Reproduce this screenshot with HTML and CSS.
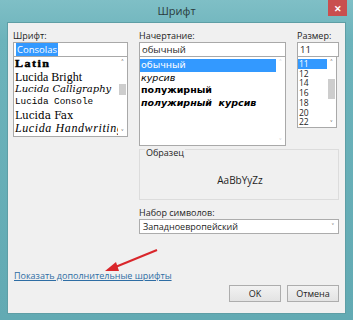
FILE: index.html
```html
<!DOCTYPE html>
<html lang="ru">
<head>
  <meta charset="UTF-8" />
  <title>Шрифт</title>
  <link rel="stylesheet" href="styles.css">
</head>
<body>
  <div class="window">
    <div class="titlebar">
      <span class="title">Шрифт</span>
      <span class="close">✕</span>
    </div>
    <div class="client">
      <div class="top">
        <div class="col">
          <div class="label">Шрифт:</div>
          <div class="input"><span class="sel">Consolas</span></div>
          <div class="list fonts">
            <div class="items">
              <div class="f-latin">Latin</div>
              <div class="f-bright">Lucida Bright</div>
              <div class="f-calli">Lucida Calligraphy</div>
              <div class="f-console">Lucida Console</div>
              <div class="f-fax">Lucida Fax</div>
              <div class="f-hand">Lucida Handwriting</div>
            </div>
            <div class="scroll">
              <span class="arrow">˄</span>
              <span class="track"><span class="thumb thumb-fonts"></span></span>
              <span class="arrow">˅</span>
            </div>
          </div>
        </div>

        <div class="col">
          <div class="label">Начертание:</div>
          <div class="input">обычный</div>
          <div class="list styles">
            <div class="items">
              <div class="active">обычный</div>
              <div class="s-italic">курсив</div>
              <div class="s-bold">полужирный</div>
              <div class="s-bold s-italic">полужирный&nbsp; курсив</div>
            </div>
            <div class="scroll disabled">
              <span class="arrow">˄</span>
              <span class="track"></span>
              <span class="arrow">˅</span>
            </div>
          </div>
        </div>

        <div class="col">
          <div class="label">Размер:</div>
          <div class="input">11</div>
          <div class="list sizes">
            <div class="items">
              <div class="active">11</div>
              <div>12</div>
              <div>14</div>
              <div>16</div>
              <div>18</div>
              <div>20</div>
              <div>22</div>
            </div>
            <div class="scroll">
              <span class="arrow">˄</span>
              <span class="track"><span class="thumb thumb-sizes"></span></span>
              <span class="arrow">˅</span>
            </div>
          </div>
        </div>
      </div>

      <div class="lower">
        <div class="sample">
          <span class="legend">Образец</span>
          <div class="sample-text">AaBbYyZz</div>
        </div>
        <div class="label">Набор символов:</div>
        <div class="select">
          <span>Западноевропейский</span>
          <span class="caret">˅</span>
        </div>
      </div>

      <div class="footer">
        <a class="more" href="#">Показать дополнительные шрифты</a>
        <div class="buttons">
          <button class="btn">OK</button>
          <button class="btn">Отмена</button>
        </div>
      </div>

      <!-- annotation arrow -->
      <svg class="pointer" width="60" height="30" viewBox="0 0 60 30">
        <line x1="56" y1="3" x2="12" y2="21" stroke="#d9262b" stroke-width="2" />
        <polygon points="4,24 15,15 18,24" fill="#d9262b" />
      </svg>
    </div>
  </div>
</body>
</html>
```

FILE: styles.css
```css
body {
  margin: 0;
  font-family: 'Open Sans', 'Noto Sans', sans-serif;
  font-size: 9px;
  color: #1e1e1e;
}

.window {
  width: 353px;
  height: 320px;
  box-sizing: border-box;
  padding: 0 7px 6px 7px;
  background: linear-gradient(to bottom, #7fbfc6, #6cb3bb 40px, #62aab3);
  display: flex;
  flex-direction: column;
}

.titlebar {
  height: 22px;
  position: relative;
  display: flex;
  align-items: center;
  justify-content: center;
}

.title {
  font-size: 11px;
  color: #2a3a3c;
  margin-top: -2px;
}

.close {
  position: absolute;
  right: -1px;
  top: 0;
  width: 19px;
  height: 16px;
  background: #c94f4f;
  color: white;
  font-size: 9px;
  font-weight: bold;
  display: flex;
  align-items: center;
  justify-content: center;
}

.client {
  flex: 1;
  position: relative;
  background: #f0f0f0;
  border: 1px solid #5e9ea5;
  padding: 8px 6px 0 5px;
  display: flex;
  flex-direction: column;
}

.top {
  display: grid;
  grid-template-columns: 115px 147px 42px;
  column-gap: 11px;
  align-items: start;
}

.label {
  height: 10px;
  line-height: 10px;
  margin-bottom: 1px;
}

.input {
  height: 13px;
  line-height: 13px;
  border: 1px solid #a9a9a9;
  background: white;
  padding-left: 2px;
  font-size: 9.5px;
}

.sel {
  background: #3399ff;
  color: white;
  padding: 0 1px;
}

.list {
  background: white;
  border: 1px solid #a9a9a9;
  border-top: none;
  display: flex;
  overflow: hidden;
}

.items {
  flex: 1;
  overflow: hidden;
  white-space: nowrap;
}

.fonts { height: 79px; }
.styles { height: 88px; }
.sizes { height: 70px; width: 38px; }

.fonts .items {
  font-size: 12px;
  line-height: 12.7px;
  padding: 1px 0 0 1px;
  color: #000;
}

.f-latin {
  font-family: 'Liberation Serif', serif;
  font-weight: 900;
  letter-spacing: 1.5px;
  -webkit-text-stroke: 0.5px #000;
  transform: scaleY(0.85);
  transform-origin: left center;
}
.f-bright { font-family: 'Liberation Serif', serif; }
.f-calli { font-family: 'DejaVu Serif', serif; font-style: italic; font-size: 10px; }
.f-console { font-family: 'Liberation Mono', monospace; font-size: 9.3px; }
.f-fax { font-family: 'DejaVu Serif', serif; font-size: 10.5px; }
.f-hand { font-family: 'Liberation Serif', serif; font-style: italic; letter-spacing: 0.6px; }

.styles .items {
  font-family: 'DejaVu Sans', sans-serif;
  font-size: 9.5px;
  line-height: 12.7px;
  padding-top: 2px;
  color: #000;
}

.styles .items div { padding-left: 1px; }

.sizes .items {
  font-size: 8.5px;
  line-height: 9.7px;
  padding-top: 2px;
}

.sizes .items div { padding-left: 1px; }

.active {
  background: #3399ff;
  color: white;
}

.s-italic { font-style: italic; }
.s-bold { font-weight: bold; }

.scroll {
  width: 9px;
  display: flex;
  flex-direction: column;
  align-items: center;
  font-size: 8px;
  color: #444;
}

.arrow {
  height: 9px;
  line-height: 11px;
}

.track {
  flex: 1;
  width: 100%;
  position: relative;
}

.thumb {
  position: absolute;
  left: 1px;
  right: 1px;
  background: #cdcdcd;
}

.thumb-fonts { top: 18px; height: 11px; }
.thumb-sizes { top: 13px; height: 20px; }

.scroll.disabled { color: #c8c8c8; }

.lower {
  margin-left: 126px;
  width: 200px;
  margin-top: 3px;
}

.sample {
  height: 49px;
  border: 1px solid #dcdcdc;
  position: relative;
  display: flex;
  align-items: center;
  justify-content: center;
  margin-bottom: 8px;
}

.legend {
  position: absolute;
  top: -4px;
  left: 5px;
  background: #f0f0f0;
  padding: 0 1px;
}

.sample-text {
  font-size: 10px;
  margin-top: 10px;
  margin-left: 2px;
}

.select {
  height: 13px;
  line-height: 13px;
  border: 1px solid #acacac;
  background: white;
  padding: 0 4px 0 3px;
  display: flex;
  justify-content: space-between;
}

.caret {
  font-size: 8px;
  color: #555;
}

.footer {
  flex: 1;
  display: flex;
  flex-direction: column;
  justify-content: flex-end;
  padding-bottom: 11px;
}

.more {
  color: #2e6da4;
  text-decoration: underline;
  align-self: flex-start;
  margin-left: 1px;
  margin-bottom: 3px;
}

.buttons {
  display: flex;
  justify-content: flex-end;
  gap: 6px;
}

.btn {
  width: 52px;
  height: 17px;
  padding: 0;
  border: 1px solid #adadad;
  background: linear-gradient(to bottom, #f2f2f2, #e3e3e3);
  font-family: 'Open Sans', 'Noto Sans', sans-serif;
  font-size: 9px;
  color: #1e1e1e;
}

.pointer {
  position: absolute;
  left: 93px;
  top: 224px;
}
```
